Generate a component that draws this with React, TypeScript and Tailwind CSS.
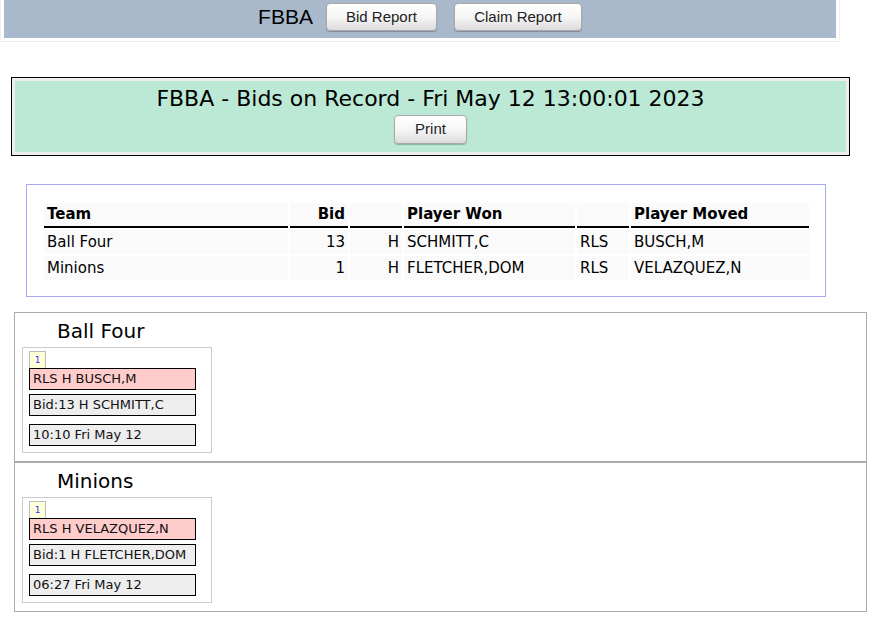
import React from "react";

const btn =
  "h-[28px] rounded-[4px] border border-[#a8a8a8] bg-gradient-to-b from-white via-[#f6f6f6] to-[#dcdcdc] font-['Liberation_Sans',Arial,sans-serif] text-[15px] text-[#222] shadow-[0_1px_1px_rgba(0,0,0,0.25)]";

function TeamSection({ name, moved, bid, time }: { name: string; moved: string; bid: string; time: string }) {
  return (
    <div className="border border-[#aaaaaa] pt-[4px] pb-[8px] px-[7px]">
      <div className="pl-[35px] text-[20px] leading-[28px] text-black">{name}</div>
      <div className="mt-[2px] w-[190px] border border-[#cccccc] px-[6px] pt-[3px] pb-[6px]">
        <div className="flex h-[17px] w-[17px] items-center justify-center border border-b-0 border-[#bbbbbb] bg-[#ffffd8] text-[9px] leading-none text-[#3333ff]">
          1
        </div>
        <div className="h-[22px] w-[167px] border border-black bg-[#ffcccc] pl-[3px] text-[13px] leading-[20px] text-[#111]">
          {moved}
        </div>
        <div className="mt-[4px] h-[22px] w-[167px] border border-black bg-[#eeeeee] pl-[3px] text-[13px] leading-[20px] text-[#111]">
          {bid}
        </div>
        <div className="mt-[8px] h-[22px] w-[167px] border border-black bg-[#eeeeee] pl-[3px] text-[13px] leading-[20px] text-[#111]">
          {time}
        </div>
      </div>
    </div>
  );
}

export default function App() {
  const th = "border-b-2 border-black bg-[#fafafa] px-[3px] text-left font-bold leading-[23px]";
  const td = "bg-[#fafafa] px-[3px] leading-[24px]";
  return (
    <div className="min-h-[633px] bg-white font-['DejaVu_Sans',Verdana,sans-serif] text-black">
      {/* top bar */}
      <div className="w-[840px] border border-t-0 border-[#eeeeee] px-[3px] pb-[3px]">
        <div className="flex h-[38px] items-start justify-center bg-[#a9b9cb] pt-[3px]">
          <span className="mr-[13px] font-['Liberation_Sans',Arial,sans-serif] text-[21px] leading-[28px] text-black">FBBA</span>
          <button className={btn + " w-[111px]"}>Bid Report</button>
          <button className={btn + " ml-[17px] w-[128px]"}>Claim Report</button>
        </div>
      </div>

      {/* title box */}
      <div className="ml-[11px] mt-[35px] w-[839px] border border-black bg-[#eeeeee] px-[3px] pt-[3px] pb-[3px]">
        <div className="flex h-[71px] flex-col items-center bg-[#bbe9d6] pt-[3px]">
          <div className="text-[22px] leading-[29px]">FBBA - Bids on Record - Fri May 12 13:00:01 2023</div>
          <button className={btn + " mt-[2px] h-[29px] w-[73px]"}>Print</button>
        </div>
      </div>

      {/* bids table */}
      <div className="ml-[26px] mt-[28px] w-[800px] border border-[#a8a8f8] px-[15px] pt-[16px] pb-[14px]">
        <table className="w-[769px] border-separate border-spacing-[2px] text-[15px]">
          <thead>
            <tr>
              <th className={th + " w-[244px]"}>Team</th>
              <th className={th + " w-[58px] text-right"}>Bid</th>
              <th className={th + " w-[52px]"}></th>
              <th className={th + " w-[171px]"}>Player Won</th>
              <th className={th + " w-[52px]"}></th>
              <th className={th}>Player Moved</th>
            </tr>
          </thead>
          <tbody>
            <tr>
              <td className={td}>Ball Four</td>
              <td className={td + " text-right"}>13</td>
              <td className={td + " text-right"}>H</td>
              <td className={td}>SCHMITT,C</td>
              <td className={td}>RLS</td>
              <td className={td}>BUSCH,M</td>
            </tr>
            <tr>
              <td className={td}>Minions</td>
              <td className={td + " text-right"}>1</td>
              <td className={td + " text-right"}>H</td>
              <td className={td}>FLETCHER,DOM</td>
              <td className={td}>RLS</td>
              <td className={td}>VELAZQUEZ,N</td>
            </tr>
          </tbody>
        </table>
      </div>

      {/* team sections */}
      <div className="ml-[14px] mt-[15px] w-[853px]">
        <TeamSection name="Ball Four" moved="RLS H BUSCH,M" bid="Bid:13 H SCHMITT,C" time="10:10 Fri May 12" />
        <TeamSection name="Minions" moved="RLS H VELAZQUEZ,N" bid="Bid:1 H FLETCHER,DOM" time="06:27 Fri May 12" />
      </div>
    </div>
  );
}
